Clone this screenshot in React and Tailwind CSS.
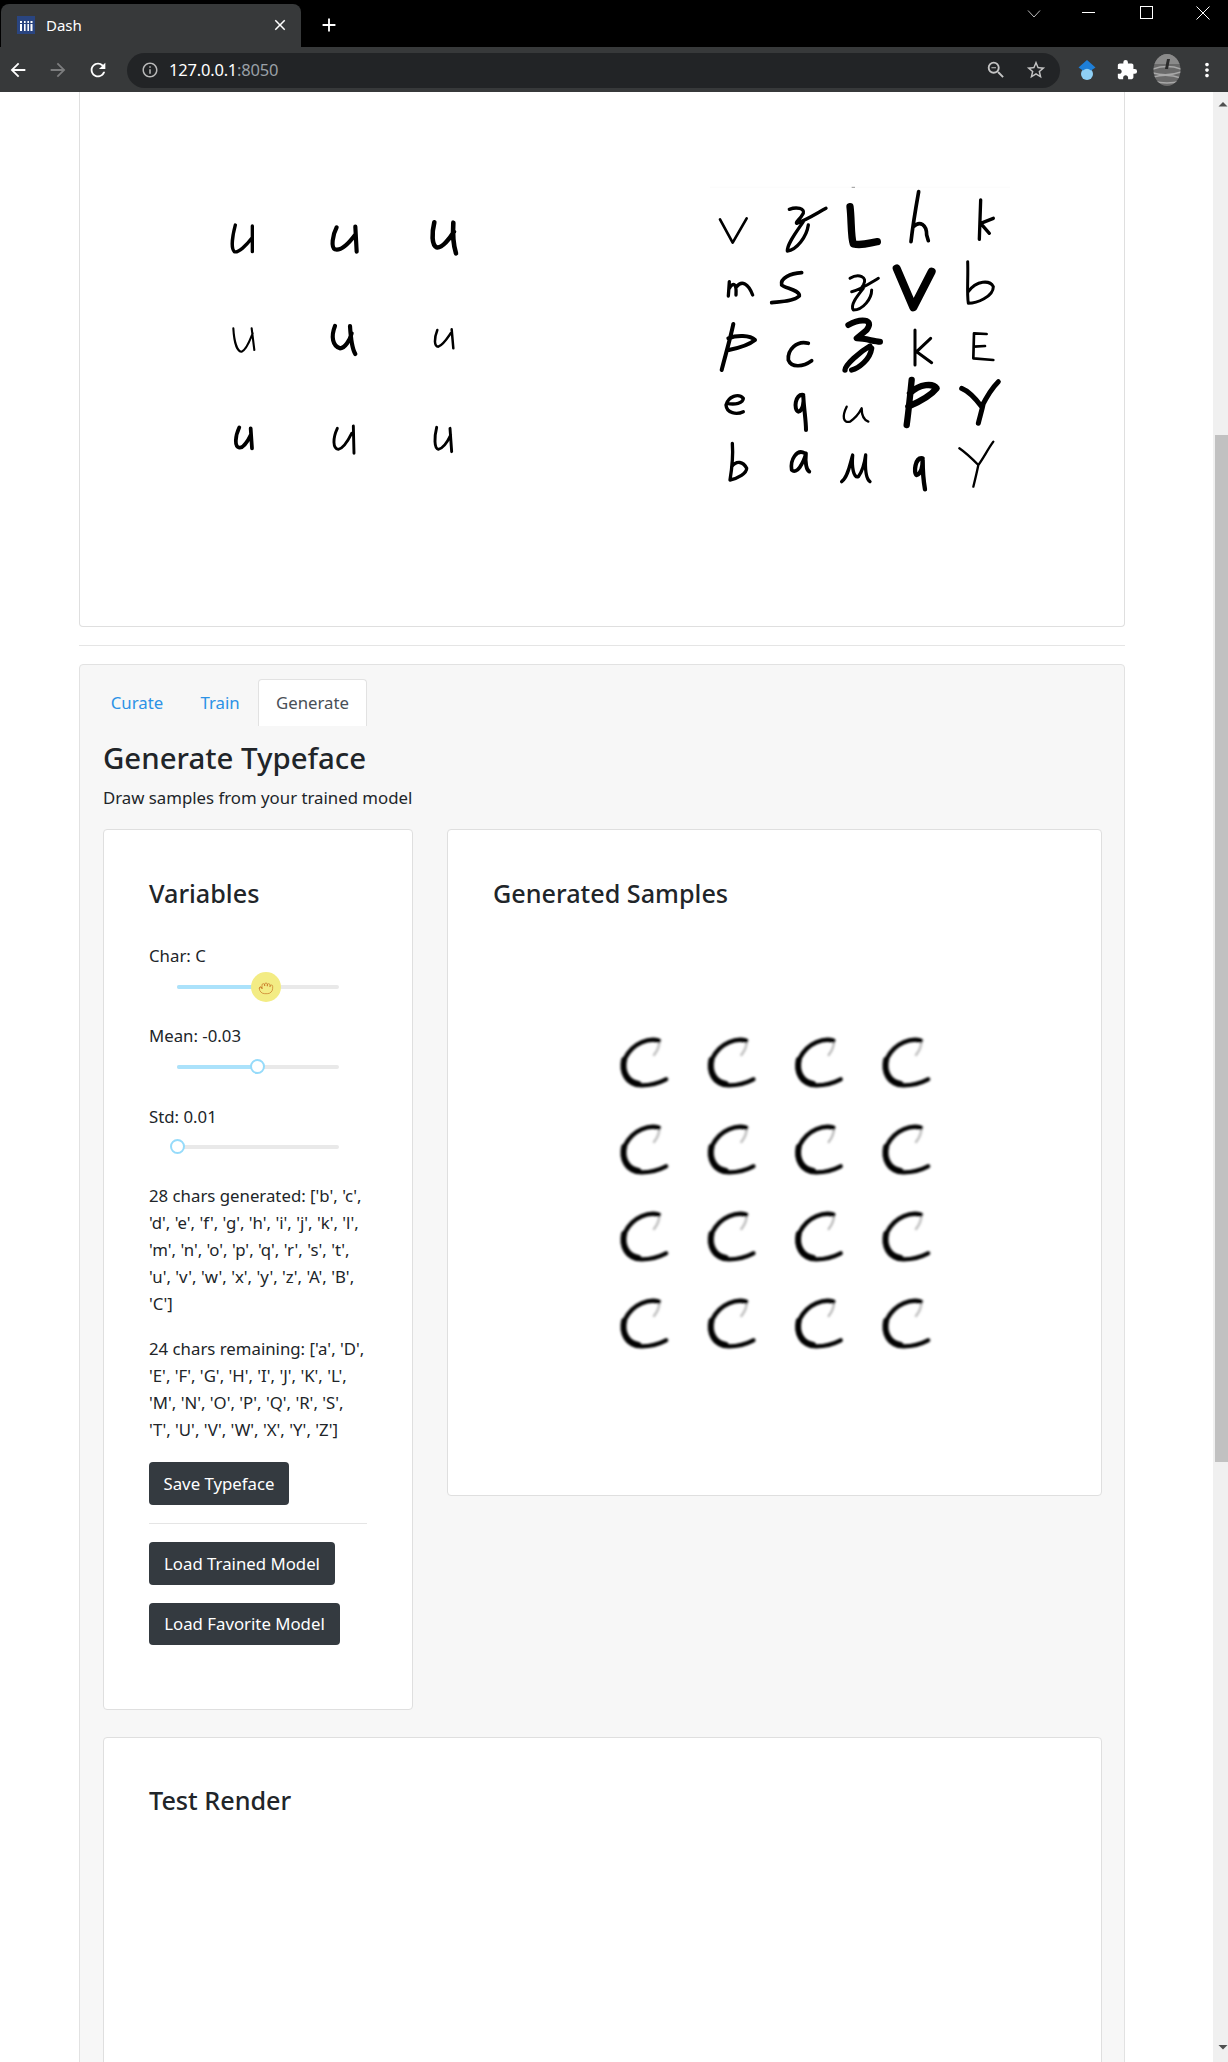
import React from "react";
import { MdArrowBack, MdArrowForward, MdRefresh, MdInfoOutline, MdStarBorder, MdZoomOut, MdMoreVert, MdClose, MdAdd, MdExtension } from "react-icons/md";
import { Grab } from "lucide-react";

const FONT = { fontFamily: '"Noto Sans", "Open Sans", sans-serif' };

const US = [
  ["M106 165 C98 195 92 235 103 245 C115 250 140 225 155 205 M157 168 L157 245", 8],
  ["M410 172 C398 195 392 232 405 238 C425 244 450 215 465 195 M466 170 L470 245", 10],
  ["M703 157 C695 190 695 225 710 232 C725 236 750 205 762 185 M760 158 C758 190 760 225 768 250", 11],
  ["M100 475 C102 510 110 545 125 545 C140 540 150 510 158 490 M155 475 L163 540", 5],
  ["M405 468 C392 500 398 528 420 535 C435 535 450 510 455 490 M450 468 C452 500 455 535 466 552", 10],
  ["M712 480 C702 505 702 530 715 530 C730 525 745 500 752 490 M755 478 L760 535", 6],
  ["M118 772 C105 800 103 830 118 833 C130 835 145 810 152 795 M152 775 L156 835", 9],
  ["M412 775 C398 805 398 835 415 838 C430 835 445 810 455 790 M460 768 L462 850", 7],
  ["M710 772 C703 800 702 835 715 838 C730 835 745 810 752 795 M750 775 L755 845", 7],
];

const MIX = [
  ["M60 148 L98 218 L140 145", 8],
  ["M268 118 C290 110 315 115 310 130 C300 150 285 155 290 160 C320 150 350 130 378 115 M310 155 C290 185 262 220 262 243 C290 240 320 200 325 165", 10],
  ["M450 110 C455 150 452 200 460 222 C490 228 510 218 532 215", 22],
  ["M656 65 C648 110 638 170 633 215 M640 170 C660 150 680 165 680 195 L685 212", 11],
  ["M842 90 L838 208 M880 145 L842 160 L868 190", 10],
  ["M88 335 L85 378 M88 355 C100 335 110 340 108 375 M110 350 C125 330 145 340 158 375", 10],
  ["M305 308 C270 310 240 325 245 345 C255 355 300 360 298 378 C280 395 240 395 215 398", 11],
  ["M450 325 C475 310 505 320 490 345 L480 360 M455 365 C480 360 510 340 535 325 M490 355 C470 380 450 405 460 420 C490 420 515 385 515 360", 9],
  ["M590 295 L640 412 L695 305", 24],
  ["M803 275 C805 320 800 370 805 400 C830 400 880 380 880 350 C870 330 830 330 805 365", 9],
  ["M100 462 C90 510 75 560 65 600 M85 505 C110 495 150 495 165 510 C140 530 110 535 85 540", 12],
  ["M325 520 C290 510 262 540 265 570 C275 595 310 590 335 572", 11],
  ["M445 465 C480 445 525 445 500 480 L470 505 C500 505 520 515 540 515", 18],
  ["M510 528 C480 545 435 585 435 600 M515 535 C510 570 475 595 455 600", 16],
  ["M645 480 L645 585 M692 505 L650 545 L695 578", 9],
  ["M822 490 L820 565 L880 570 M822 490 L860 492 M822 530 L855 528", 8],
  ["M80 700 C105 705 130 700 130 685 C115 668 85 680 78 705 C80 730 110 735 130 725", 10],
  ["M310 675 C285 670 280 720 295 725 C310 720 312 695 310 680 C312 720 318 750 318 780", 12],
  ["M440 710 C425 740 430 760 450 755 C465 745 480 725 485 715 C485 735 490 750 505 755", 7],
  ["M635 630 C630 680 625 730 620 765 M630 670 C660 640 700 640 710 655 C690 680 660 695 625 710", 19],
  ["M785 655 C810 665 830 690 845 710 C860 680 880 650 895 635 M850 700 C845 725 838 745 835 760", 15],
  ["M97 820 C100 860 95 900 90 930 C115 925 140 910 140 895 C130 875 110 870 95 890", 10],
  ["M315 850 C290 835 270 870 275 900 C290 915 310 880 318 850 C315 880 320 900 328 905", 11],
  ["M425 935 C445 920 450 880 458 855 C455 890 460 925 475 920 C490 900 495 870 497 855 C495 890 495 925 510 935", 10],
  ["M668 865 C645 860 640 910 650 915 C665 910 668 890 668 870 C668 900 670 930 675 958", 13],
  ["M778 835 C800 850 820 870 835 885 C850 865 865 835 880 815 M835 885 C830 910 825 930 820 950", 7],
];

function Strokes({ items, scale = 1 }) {
  return items.map(([d, w], i) => (
    <path key={i} d={d} fill="none" stroke="#000" strokeWidth={w * scale} strokeLinecap="round" strokeLinejoin="round" />
  ));
}

function SamplesU() {
  return (
    <svg width="300" height="320" viewBox="0 0 900 960" className="shrink-0">
      <defs><filter id="softu"><feGaussianBlur stdDeviation="0.9" /></filter></defs>
      <g filter="url(#softu)"><Strokes items={US} scale={1.25} /></g>
    </svg>
  );
}

function SamplesMixed() {
  return (
    <svg width="320" height="330" viewBox="0 0 960 990" className="shrink-0">
      <defs><filter id="softm"><feGaussianBlur stdDeviation="0.7" /></filter></defs>
      <path d="M30 52 L930 52" stroke="#f9f9f9" strokeWidth="2" />
      <path d="M455 52 L465 52" stroke="#999" strokeWidth="3" />
      <g filter="url(#softm)"><Strokes items={MIX} /></g>
    </svg>
  );
}

function SamplesC() {
  const cells = [];
  for (let r = 0; r < 4; r++) for (let c = 0; c < 4; c++) cells.push([c * 262, r * 261]);
  return (
    <svg width="350" height="360" viewBox="0 0 1050 1080" className="shrink-0">
      <defs>
        <filter id="soft"><feGaussianBlur stdDeviation="2.4" /></filter>
      </defs>
      <g filter="url(#soft)">
        {cells.map(([x, y], i) => (
          <g key={i} transform={`translate(${x} ${y})`}>
            <path d="M178 93 C178 110 170 125 162 135" fill="none" stroke="#bbb" strokeWidth="7" strokeLinecap="round" />
            <path d="M176 92 C150 84 100 95 75 145 C60 190 80 225 125 226 C150 226 175 220 198 208" fill="none" stroke="#000" strokeWidth="13" strokeLinecap="round" />
            <path d="M72 150 C65 185 80 215 115 222" fill="none" stroke="#000" strokeWidth="18" strokeLinecap="round" />
          </g>
        ))}
      </g>
    </svg>
  );
}

function Favicon() {
  return (
    <svg width="18" height="18" viewBox="0 0 18 18" className="shrink-0">
      <rect width="18" height="18" fill="#2a4580" />
      <g fill="#fff">
        <rect x="3" y="8" width="2" height="7" />
        <rect x="3" y="5" width="2" height="2" />
        <rect x="7" y="8" width="1.6" height="7" />
        <rect x="7" y="5" width="1.6" height="2" />
        <rect x="10.4" y="8" width="1.6" height="7" />
        <rect x="10.4" y="5" width="1.6" height="2" />
        <rect x="13.5" y="8" width="2" height="7" />
        <rect x="13.5" y="5" width="2" height="2" />
      </g>
    </svg>
  );
}

function ExtIcon() {
  return (
    <svg width="20" height="22" viewBox="0 0 20 22" className="shrink-0">
      <circle cx="10" cy="15" r="6" fill="#8fd0f5" />
      <path d="M10 1 L18.5 8.5 L14 11.5 Q10 8 6 11.5 L1.5 8.5 Z" fill="#1e7fd8" />
    </svg>
  );
}

function Avatar() {
  return (
    <svg width="28" height="32" viewBox="0 0 28 32" className="shrink-0">
      <defs>
        <clipPath id="av"><ellipse cx="14" cy="16" rx="13.5" ry="16" /></clipPath>
      </defs>
      <g clipPath="url(#av)">
        <rect width="28" height="32" fill="#6a6a6a" />
        <rect width="28" height="10" fill="#8a8a8a" />
        <path d="M0 15 Q14 10 28 15 M0 19 Q14 23 28 18 M0 23 Q14 19 28 24 M0 27 Q14 31 28 27" stroke="#a8a8a8" strokeWidth="1.4" fill="none" />
        <path d="M12 15 L14 5 L17 5 L15 15 Z" fill="#2a2a2a" />
      </g>
    </svg>
  );
}

function Chrome() {
  return (
    <div className="shrink-0 h-[92px] bg-black flex flex-col">
      <div className="h-[47px] flex">
        <div className="ml-[1px] mt-[4px] w-[300px] h-[43px] rounded-t-[8px] bg-[#37393a] flex items-center pl-[16px] pr-[12px] pb-[1px] text-white">
          <Favicon />
          <span className="ml-[11px] text-[15px] flex-1">Dash</span>
          <MdClose size={18} />
        </div>
        <div className="ml-[17px] mt-[14px] text-white"><MdAdd size={22} /></div>
        <div className="flex-1" />
        <div className="w-[201px] flex items-start text-white pt-[6px]">
          <svg width="14" height="14" viewBox="0 0 14 14" className="mt-[1px]"><path d="M1 3.5 L7 10 L13 3.5" fill="none" stroke="#bdbdbd" strokeWidth="1" /></svg>
          <svg width="13" height="14" viewBox="0 0 13 14" className="ml-[41px]"><path d="M0 6.5 H13" stroke="#fff" strokeWidth="1" /></svg>
          <svg width="13" height="13" viewBox="0 0 13 13" className="ml-[45px]"><rect x="0.5" y="0.5" width="12" height="12" fill="none" stroke="#fff" strokeWidth="1" /></svg>
          <svg width="14" height="14" viewBox="0 0 14 14" className="ml-[43px]"><path d="M0.5 0.5 L13.5 13.5 M13.5 0.5 L0.5 13.5" stroke="#fff" strokeWidth="1" /></svg>
        </div>
      </div>
      <div className="h-[45px] bg-[#37393a] flex items-center pt-[1px] text-white">
        <MdArrowBack size={22} className="ml-[7px]" />
        <MdArrowForward size={22} className="ml-[18px] text-[#7c7d7e]" />
        <MdRefresh size={22} className="ml-[18px]" />
        <div className="ml-[18px] w-[933px] h-[35px] rounded-full bg-[#222426] flex items-center pl-[14px] pr-[13px]">
          <MdInfoOutline size={18} className="text-[#b9b9b9]" />
          <span className="ml-[10px] text-[16.5px] flex-1 tracking-[-0.2px]">
            127.0.0.1<span className="text-[#9aa0a6]">:8050</span>
          </span>
          <MdZoomOut size={22} className="text-[#c4c4c4]" />
          <MdStarBorder size={22} className="ml-[18px] text-[#c4c4c4]" />
        </div>
        <div className="ml-[17px]"><ExtIcon /></div>
        <MdExtension size={22} className="ml-[19px]" />
        <div className="ml-[15px]"><Avatar /></div>
        <MdMoreVert size={22} className="ml-[15px]" />
      </div>
    </div>
  );
}

function Slider({ pct, active }) {
  return (
    <div className={`relative ml-[28px] ${active ? "mt-[16.5px]" : "mt-[15.5px]"} w-[162px] h-[4px] rounded bg-[#e9e9e9]`}>
      <div className="h-full rounded bg-[#abe2fb]" style={{ width: `${pct}%` }} />
      {active ? (
        <div className="absolute top-[-13px] w-[30px] h-[30px] -ml-[15px] rounded-full bg-[#f3ec84] flex items-center justify-center" style={{ left: `${pct}%` }}>
          <Grab size={16} strokeWidth={1} color="#c4701f" />
        </div>
      ) : (
        <div className="absolute top-[-6px] w-[15px] h-[15px] -ml-[7.5px] rounded-full bg-white border-2 border-[#96dbfa]" style={{ left: `${pct}%` }} />
      )}
    </div>
  );
}

function SliderGroup({ label, pct, active }) {
  return (
    <div className="h-[80.5px]">
      <div className="leading-[27px]">{label}</div>
      <Slider pct={pct} active={active} />
    </div>
  );
}

function Btn({ w, h, children }) {
  return (
    <button className={`${w} ${h} block rounded-[4px] bg-[#343a40] text-white text-[16.8px] text-center`}>{children}</button>
  );
}

export default function App() {
  return (
    <div className="w-[1228px] h-[2062px] overflow-hidden bg-white flex flex-col text-[#212529] text-[16.8px]" style={FONT}>
      <Chrome />
      <div className="flex flex-1 min-h-0">
        <div className="w-[1213px] overflow-hidden">
          <div className="ml-[79px] w-[1046px] h-[535px] border-x border-b border-[#dfdfdf] rounded-b-[4px] flex pl-[120px] pt-[78px]">
            <SamplesU />
            <div className="ml-[200px]"><SamplesMixed /></div>
          </div>
          <div className="ml-[79px] w-[1046px] mt-[18px] h-px bg-[#e5e5e5]" />
          <div className="ml-[79px] w-[1046px] mt-[18px] h-[1500px] bg-[#f7f7f7] border border-[#e2e2e2] rounded-[4px] px-[23px] pt-[14px]">
            <div className="flex h-[47px] -ml-[11px] items-stretch">
              <div className="w-[90px] flex items-center justify-center text-[#2c92e6]">Curate</div>
              <div className="w-[76px] flex items-center justify-center text-[#2c92e6]">Train</div>
              <div className="w-[109px] flex items-center justify-center bg-white border-x border-t border-[#e2e2e2] rounded-t-[4px] text-[#495057]">Generate</div>
            </div>
            <h3 className="mt-[12px] h-[40px] leading-[40px] text-[29.4px] font-medium">Generate Typeface</h3>
            <p className="mt-[5.5px] leading-[27px]">Draw samples from your trained model</p>
            <div className="mt-[18.5px] flex gap-[34px] items-start">
              <div className="w-[310px] h-[881px] shrink-0 bg-white border border-[#dfdfdf] rounded-[4px] pl-[45px] pt-[45px] whitespace-nowrap">
                <h4 className="h-[36px] leading-[36px] text-[25.2px] font-medium">Variables</h4>
                <div className="mt-[30.5px]">
                  <SliderGroup label="Char: C" pct={55} active />
                  <SliderGroup label="Mean: -0.03" pct={49.5} />
                  <SliderGroup label="Std: 0.01" pct={0} />
                </div>
                <p className="leading-[26.88px] mb-[19px]">
                  28 chars generated: ['b', 'c',<br />
                  'd', 'e', 'f', 'g', 'h', 'i', 'j', 'k', 'l',<br />
                  'm', 'n', 'o', 'p', 'q', 'r', 's', 't',<br />
                  'u', 'v', 'w', 'x', 'y', 'z', 'A', 'B',<br />
                  'C']
                </p>
                <p className="leading-[26.88px] mb-[18px]">
                  24 chars remaining: ['a', 'D',<br />
                  'E', 'F', 'G', 'H', 'I', 'J', 'K', 'L',<br />
                  'M', 'N', 'O', 'P', 'Q', 'R', 'S',<br />
                  'T', 'U', 'V', 'W', 'X', 'Y', 'Z']
                </p>
                <Btn w="w-[140px]" h="h-[43px]">Save Typeface</Btn>
                <div className="mt-[18px] w-[218px] h-px bg-[#e5e5e5]" />
                <div className="mt-[18px]"><Btn w="w-[186px]" h="h-[43px]">Load Trained Model</Btn></div>
                <div className="mt-[18px]"><Btn w="w-[191px]" h="h-[42px]">Load Favorite Model</Btn></div>
              </div>
              <div className="w-[655px] h-[667px] shrink-0 bg-white border border-[#dfdfdf] rounded-[4px] pl-[45px] pt-[45px]">
                <h4 className="h-[36px] leading-[36px] text-[25.2px] font-medium">Generated Samples</h4>
                <div className="mt-[99px] ml-[107px]"><SamplesC /></div>
              </div>
            </div>
            <div className="mt-[27px] w-[999px] h-[500px] bg-white border border-[#dfdfdf] rounded-[4px] pl-[45px] pt-[44px]">
              <h4 className="h-[36px] leading-[36px] text-[25.2px] font-medium">Test Render</h4>
            </div>
          </div>
        </div>
        <div className="w-[15px] bg-[#f0f0f0] flex flex-col">
          <svg width="15" height="17" viewBox="0 0 15 17" className="shrink-0 mt-[6px]"><path d="M6 4 L10.5 8.5 H1.5 Z" fill="#505050" transform="translate(4 0)" /></svg>
          <div className="mt-[320px] ml-[2px] w-[13px] h-[1027px] bg-[#c1c1c1]" />
          <div className="flex-1" />
          <svg width="15" height="17" viewBox="0 0 15 17" className="shrink-0 mb-[5px]"><path d="M1.5 5 H10.5 L6 9.5 Z" fill="#505050" transform="translate(4 0)" /></svg>
        </div>
      </div>
    </div>
  );
}
